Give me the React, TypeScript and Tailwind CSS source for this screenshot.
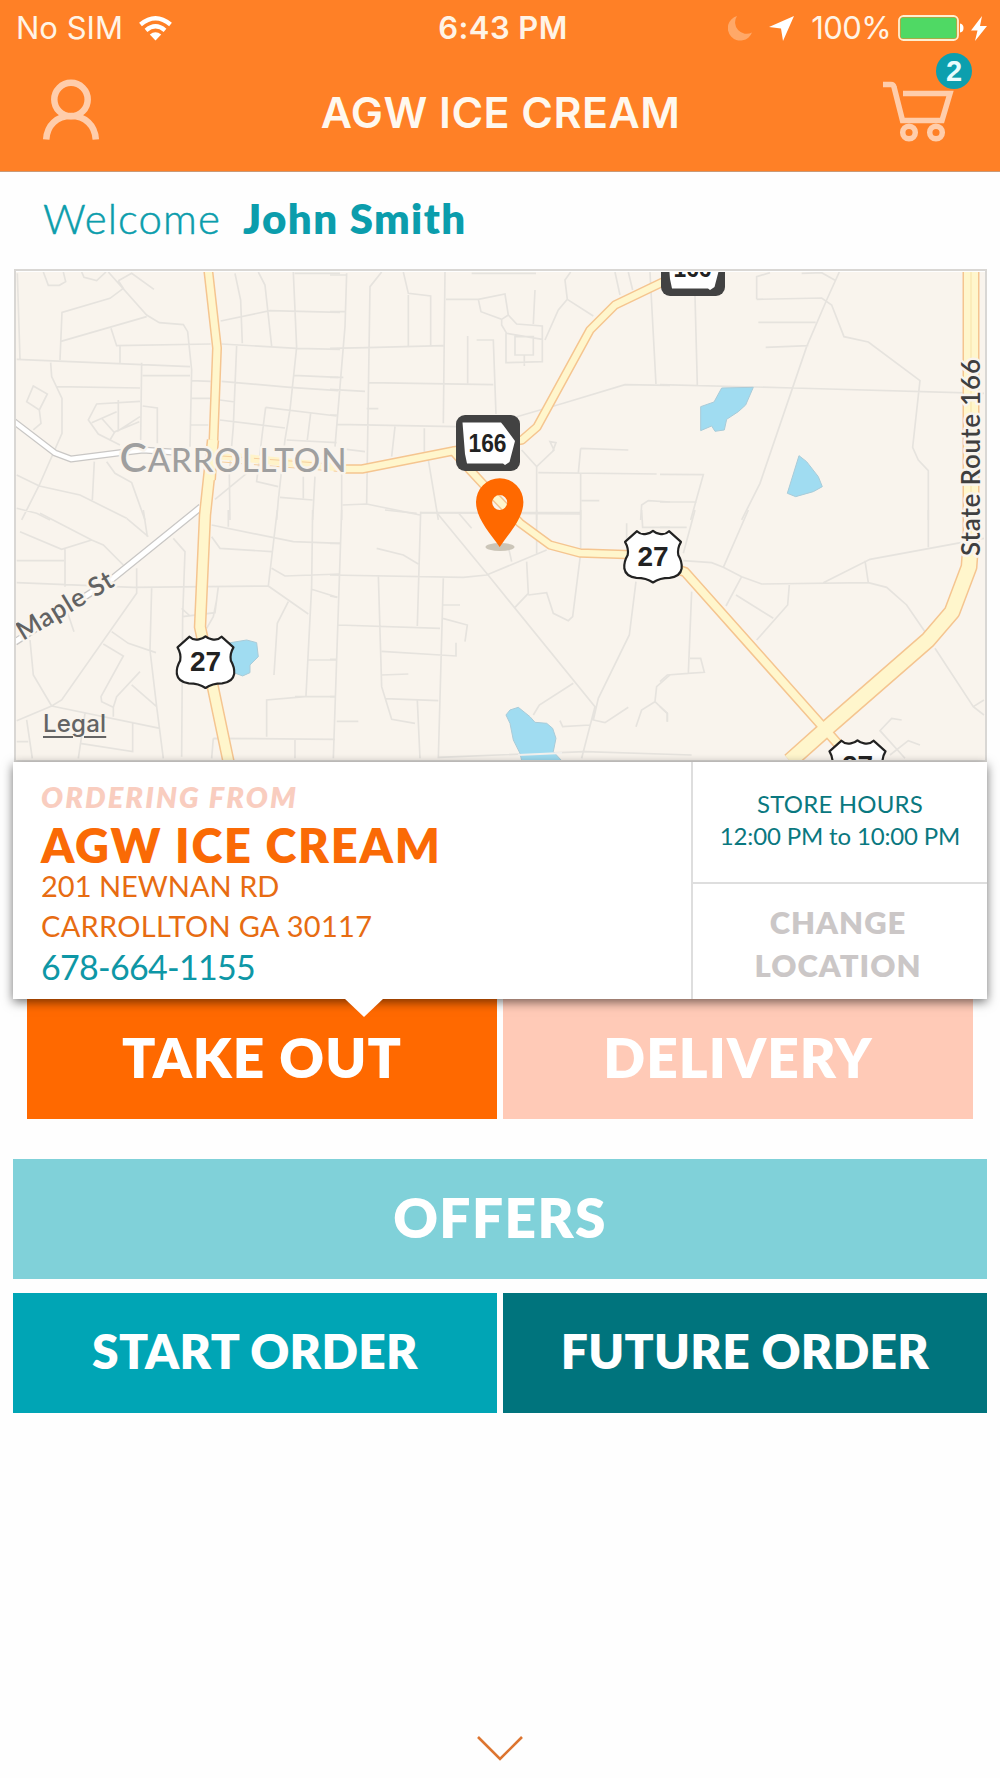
const US_SHIELD =
  'M-48 -76Q-36 -64 -20 -68Q-8 -70 0 -77Q8 -70 20 -68Q36 -64 48 -76L84 -44Q72 -24 76 -4Q88 16 86 36Q82 60 50 64Q20 64 0 78Q-20 64 -50 64Q-82 60 -86 36Q-88 16 -76 -4Q-72 -24 -84 -44Z';

// Side streets, split in map tiles. Every tile is drawn at 3x.
const tiles = [
  {
    x: 0,
    y: 260,
    d: 'M52 40L60 298M130 36L145 76L178 76L197 65L190 36M245 36L252 52L290 62L318 36M325 36L440 165L478 188L550 194L563 215L575 330L570 560M355 62L395 40L462 88M355 62L370 85L330 115L186 157L180 300M180 245L440 170M333 205L350 257L632 252M360 257V308M50 298L570 320M152 308L155 350L186 415V520L118 675L65 780M425 308L422 540M428 347H570M168 380L420 384M428 438L472 444V550M420 424L290 432L265 480L295 522L360 555M355 420V512L420 470M275 488L350 455M305 475L345 520M330 540L345 515L418 485M100 378L142 402L118 450L80 425ZM118 450L123 490L100 510M50 645L118 678L240 705L380 775M283 605L277 720M320 605L345 640L395 668L435 780M50 745L110 760L150 780M705 40L722 120L727 250M775 36L795 75L815 258M662 183L810 152L1020 157M880 36L890 262L870 450L855 540L835 720L830 780M884 40H1020M665 252L890 265L1020 268M710 258L700 500L688 640L690 780M573 362L632 364M665 364L870 382L1015 392M880 346L1015 352M573 415H630M660 420L705 426M573 495H625M660 480L855 504M797 442L1010 468M797 442L787 520L770 665L835 680M932 460L922 540M860 540L1010 548M645 718L740 640M840 712L938 720M910 650V715M945 650L938 780',
  },
  {
    x: 330,
    y: 260,
    d: 'M0 45H50M50 40L45 200L15 560M0 155H45M0 265L110 263L340 257M155 36L120 80L110 730M220 36L235 100L302 108V256M235 105V260M345 36L340 490M348 118H445L525 102L535 165L515 178L453 155L445 118M515 178V195L530 220L637 238M535 165L560 192L637 198V305L528 308V220M555 230V285H610V230ZM583 285V318M615 90L610 192M645 240L685 150L712 118L705 60L722 36M712 118L790 168M425 40H618M413 228V370M440 240H490L498 462M115 368L490 374M0 352H40M0 388L105 394M110 446H145M20 493L380 500M195 500L185 590M283 505V575M0 465H20M295 600L320 750L325 780M545 475L700 430L885 374L1020 376M855 36L870 105M895 36L908 90M960 36L978 372M575 570L620 620L672 570L660 545L678 548L668 575M620 620V780M625 638L980 642M752 565L745 640M752 565L895 570M752 642V780M755 722H808M932 780L935 735L955 722L1020 726M38 735L110 732L270 765M35 570V780M50 568L105 575M270 758H750',
  },
  {
    x: 660,
    y: 260,
    d: 'M105 108L112 376M0 374L400 384L972 400M290 118V50L330 38M290 118L485 114L515 135L552 230L625 246L780 362L758 562L775 600L805 632V780M295 187H467M317 262L445 257M425 40L485 38L528 62M538 36L500 120L440 260L300 670L245 780M0 643L130 644L92 780M0 726H110',
  },
  {
    x: 0,
    y: 510,
    d: 'M60 65L185 118L275 90M120 10L275 90L310 105L370 165M380 25L445 80M430 0L442 80M50 152H192M195 118V230M222 365L200 300M50 218L400 232L805 228M410 175V250L185 570L155 588L50 632M155 588L100 495L90 390M520 85L555 125L548 320L545 740M455 235L450 420L470 590L490 745M335 365L385 400L468 428M310 402L370 438L303 560L305 575L340 592L350 560L420 485M395 525L470 590M340 592V620M155 588L480 655M398 635V725L240 700M255 610L235 745M80 630L97 745M50 695H85M548 320L645 308L655 230M545 295L570 318M685 0V50M635 45L880 95L1020 100M635 80L660 115L815 125M832 0L805 228L925 312M815 175L855 198L1020 192M938 0L935 230L918 558M935 238L1012 262M865 275L832 340L822 495M620 355L640 320L650 270M925 450H1010M1005 560H885M915 560L800 570V680M640 685L1005 688M640 685L635 745M885 688V745',
  },
  {
    x: 330,
    y: 510,
    d: 'M25 345L330 355M0 195L400 202L470 195L650 120M35 0L10 745M0 100H30M0 258L22 262M0 448H20M0 560H16M20 634H85M165 0L260 10M272 5L262 348M270 8L750 12M318 5L470 190L795 590L755 745M385 8L425 55M140 115L220 135L265 162M145 195L155 530L185 628L255 640M165 566L325 572M262 572L270 745M155 424L378 438V398M155 495L235 492M340 205L325 745M338 285H390M338 325L412 345L405 395M620 0V130M535 110L545 155M590 155L595 250L555 292M595 255L650 248L670 310L715 332L728 320L752 130V0M890 40V120M935 0L938 52H1020M918 215L898 375L805 565L790 630L825 638L895 592M690 632L698 650L780 645M610 615L628 585L730 520M325 742L765 725L1085 735M1020 495L980 530L975 575L935 600L918 650M975 575L1012 610V635',
  },
  {
    x: 660,
    y: 510,
    d: 'M105 0L70 130M0 52H80M265 0L190 172M70 152L155 158L190 172L245 200L305 222L625 218L680 232L740 285L795 365M825 415L940 590L972 615M940 590L972 570M245 200L198 288M228 255L340 325M388 225L383 285L290 390M490 218L630 148L972 85M615 152L625 218M805 0V112M95 245L85 490L133 487L122 445H90M85 490L22 495L0 515M0 590L22 610V635M725 630L695 625L660 662L735 745M690 735L745 692L780 705',
  },
];

const highways = [
  { d: 'M208 268L217 348L213.5 440L211 480', w: 10 },
  { d: 'M213 440L205 515L200 627L212 683L229 764', w: 12.5 },
  { d: 'M340 469L362 469L453 451L470 470L483 484L520 523L550 545L580 553L640 555', w: 9.5 },
  { d: 'M453 451L500 443L522 440L537 427L590 330L615 305L665 281', w: 9.5 },
  { d: 'M670 567L685 572L823 727L845 752', w: 10.5 },
  { d: 'M971 268V540L969 567L952 612L928 640L827 728L790 761', w: 17 },
];

function UsShield({ x, y }: { x: number; y: number }) {
  return (
    <g transform={`translate(${x} ${y})`}>
      <path d={US_SHIELD} transform="scale(.3333)" fill="#fff" stroke="#222" strokeWidth="6.500" strokeLinejoin="round" />
      <text
        y="9"
        textAnchor="middle"
        textLength="31"
        className="font-['Liberation_Sans'] text-[28px] font-bold"
        fill="#222"
      >
        27
      </text>
    </g>
  );
}

function StateShield({ x, y }: { x: number; y: number }) {
  return (
    <g transform={`translate(${x} ${y})`}>
      <rect width="64" height="56" rx="9" fill="#424242" />
      <path d="M6.500 7.500H45L47.500 10.500L59 26L53.500 47L49 50L47 48.500H11L9 39Z" fill="#fff" />
      <text
        x="31.500"
        y="36.500"
        textAnchor="middle"
        textLength="38"
        lengthAdjust="spacingAndGlyphs"
        className="font-['Liberation_Sans'] text-[25px] font-bold"
        fill="#222"
      >
        166
      </text>
    </g>
  );
}

function StoreMap() {
  return (
    <svg viewBox="16 272 969 488" className="block h-[488px] w-[969px] bg-[#f9f4ed]">
      {tiles.map((t) => (
        <path
          key={`${t.x}-${t.y}`}
          d={t.d}
          transform={`translate(${t.x} ${t.y}) scale(.3333)`}
          fill="none"
          stroke="#e6e3de"
          strokeWidth="5"
        />
      ))}

      {/* Lakes */}
      <g fill="#a0dcf1" stroke="#a9cbd8" strokeWidth="3">
        <path
          transform="translate(660 260) scale(.3333)"
          d="M185 384L280 382L257 435L235 455L200 478L193 510L165 514L155 498L122 512V440L162 426ZM417 587L440 605L475 650L487 680L460 695L407 710L382 700Z"
        />
        <path
          transform="translate(0 510) scale(.3333)"
          d="M680 400L740 390L770 398L775 440L750 465V488L728 498L680 480Z"
        />
        <path
          transform="translate(330 510) scale(.3333)"
          d="M528 615L540 600L565 592L600 620L615 637L650 640L668 655L678 685L670 725L695 752H575L570 730L550 690L540 640Z"
        />
      </g>
      <path d="M518 755L562 753" stroke="#f3f1ee" strokeWidth="2" />

      {/* White roads */}
      <g fill="none" strokeLinejoin="round">
        <path d="M12 420L55 453L71 459L118 453L143 450L172 452" stroke="#c9c7c5" strokeWidth="7" />
        <path d="M12 420L55 453L71 459L118 453L143 450L172 452" stroke="#fff" strokeWidth="4.500" />
        <path d="M201 507L112 579L15 642" stroke="#c9c7c5" strokeWidth="7.500" />
        <path d="M201 507L112 579L15 642" stroke="#fff" strokeWidth="5" />
      </g>

      {/* Highways */}
      <g fill="none" strokeLinejoin="round">
        <path d="M215 455L345 468" stroke="#fff3c9" strokeWidth="8" />
        <path d="M222 456L345 465M222 462L345 472" stroke="#f6cf9d" strokeWidth="1" strokeDasharray="10 6" />
        {highways.map((r) => (
          <path key={r.d} d={r.d} stroke="#f5c590" strokeWidth={r.w} />
        ))}
        {highways.map((r) => (
          <path key={r.d} d={r.d} stroke="#fff6cc" strokeWidth={r.w - 3} />
        ))}
        <path d="M971 268V540" stroke="#f7e2a8" strokeWidth="1" />
      </g>

      {/* Labels */}
      <g stroke="#f9f4ed" strokeWidth="5" strokeLinejoin="round" className="[paint-order:stroke]">
        <text x="119.500" y="471.500" textLength="227" fill="#9f9f9f" className="font-[Lato] text-[33px] font-medium">
          <tspan className="text-[41px]">C</tspan>ARROLLTON
        </text>
        <text
          transform="translate(980 556) rotate(-90)"
          textLength="197"
          fill="#3f3f3f"
          className="font-[Lato] text-[26px] font-semibold"
        >
          State Route 166
        </text>
        <text
          transform="translate(23 641) rotate(-31)"
          textLength="108"
          fill="#626262"
          className="font-[Lato] text-[26px] font-semibold"
        >
          Maple St
        </text>
      </g>

      <StateShield x={456} y={415} />
      <StateShield x={661} y={240} />
      <UsShield x={205.5} y={662} />
      <UsShield x={653} y={556.5} />
      <UsShield x={857.5} y={766} />

      {/* Store pin */}
      <ellipse cx="500" cy="547" rx="14.500" ry="4" fill="#cbc5b8" />
      <path
        fillRule="evenodd"
        d="M499.700 547C489 532 476 518 476 502A23.700 23.700 0 0 1 523.400 502C523.400 518 510 532 499.700 547ZM499.700 495A7.500 7.500 0 1 0 499.700 510A7.500 7.500 0 1 0 499.700 495Z"
        fill="#ff6900"
      />
    </svg>
  );
}

function StatusBar() {
  return (
    <div className="grid h-[54px] grid-cols-3 items-center pt-px pr-[13px] pl-[16px] text-[31px] leading-[54px] text-[#fff4e6]">
      <div className="flex items-center">
        <span className="w-[123px]">No SIM</span>
        <svg viewBox="0 0 33 25" className="h-[25px] w-[33px]">
          <g fill="none" stroke="#fff" strokeWidth="4.300">
            <path d="M1.500 8.500Q16.500 -4 31.500 8.500" />
            <path d="M7 14.300Q16.500 6.300 26 14.300" />
          </g>
          <path d="M10.800 18.500Q16.500 14 22.200 18.500L16.500 24.500Z" fill="#fff" />
        </svg>
      </div>
      <span className="pl-[3px] text-center font-semibold tracking-[0.4px]">6:43 PM</span>
      <div className="flex items-center justify-end">
        <svg viewBox="0 0 24 25" className="mr-[17px] h-[25px] w-[24px]">
          <path d="M9 0A12.500 12.500 0 1 0 24 16.500A11.500 11.500 0 0 1 9 0Z" fill="#ffa868" />
        </svg>
        <svg viewBox="0 0 25 25" className="mr-[17px] h-[25px] w-[25px]">
          <path d="M25 0L14 25L12 12.500L0 11Z" fill="#fff" />
        </svg>
        <span className="mr-[7px] tracking-[-0.6px]">100%</span>
        <svg viewBox="0 0 66 26" className="mr-[7px] h-[26px] w-[66px]">
          <rect x="1" y="1" width="59" height="24" rx="4.500" fill="none" stroke="#ffefd0" strokeWidth="1.800" />
          <rect x="2.500" y="2.500" width="56" height="21" rx="2.500" fill="#4fd964" />
          <path d="M62 8.500Q65.500 9 65.500 13T62 17.500Z" fill="#fff" />
        </svg>
        <svg viewBox="0 0 16 25" className="h-[25px] w-[16px]">
          <path d="M11 0L0 14.500H6.500L4 25L16 10H9Z" fill="#fff" />
        </svg>
      </div>
    </div>
  );
}

function NavBar() {
  return (
    <div className="flex h-[117px] items-start justify-between pr-[46px] pl-[42px]">
      <svg viewBox="0 0 58 62" className="mt-[25px] h-[62px] w-[58px]" fill="none" stroke="#ffcdab" strokeWidth="6.500">
        <circle cx="29" cy="20.500" r="16.700" />
        <path d="M4.200 60.500C5 46 15 37 29 37S53 46 53.800 60.500" />
      </svg>
      <h1 className="mt-[33px] ml-[19px] text-[43px] leading-[50px] font-semibold tracking-[0.45px] text-[#fff8ee]">
        AGW ICE CREAM
      </h1>
      <div className="relative mt-[27px] h-[62px] w-[72px]">
        <svg viewBox="0 0 72 62" className="h-[62px] w-[72px]" fill="none" stroke="#ffcdab" strokeWidth="5.500">
          <path d="M1 3.500H9Q11.500 3.500 12 6L20.500 39.500H60L68 12.500H21" />
          <circle cx="27" cy="51.500" r="6.300" />
          <circle cx="54" cy="51.500" r="6.300" />
        </svg>
        <span className="absolute -top-[28px] left-[54px] flex h-[36px] w-[36px] items-center justify-center rounded-full bg-[#0c9fae] font-['Liberation_Sans'] text-[29px] leading-none font-bold text-[#e9fcfd]">
          2
        </span>
      </div>
    </div>
  );
}

export default function App() {
  return (
    <div className="flex h-[1778px] w-[1000px] flex-col overflow-hidden bg-[#fefefe] font-[Lato,sans-serif]">
      <header className="h-[172px] shrink-0 border-b border-[#c99a77] bg-[#ff8026] font-[Inter,sans-serif]">
        <StatusBar />
        <NavBar />
      </header>

      {/* Welcome */}
      <div className="flex h-[97px] shrink-0 items-center pb-[6px] pl-[43px] text-[42px] leading-[50px] text-[#0b9dac]">
        <span className="w-[200px] font-light tracking-[1.1px] [-webkit-text-stroke:0.5px_#0b9dac]">Welcome</span>
        <span className="font-extrabold tracking-[1.4px]">John Smith</span>
      </div>

      {/* Store card */}
      <main className="flex flex-col px-[13px]">
        <div className="relative ml-px h-[493px] w-[973px] border-2 border-[#d9d7d4] pt-px">
          <StoreMap />
          <span className="absolute bottom-[22px] left-[27px] font-[Inter] text-[24px] leading-[28px] font-medium tracking-[0.2px] text-[#646464] underline underline-offset-[4px]">
            Legal
          </span>
        </div>

        <section className="relative z-10 flex h-[237px] bg-white shadow-[0_3px_10px_rgba(0,0,0,0.55)]">
          <div className="flex-1 pt-[11px] pl-[28px] text-[29px] text-[#e76c12]">
            <p className="leading-[48px] font-extrabold tracking-[2.1px] text-[#f9cdbf] italic">ORDERING FROM</p>
            <h2 className="relative top-px text-[47px] leading-[46px] font-extrabold tracking-[1.8px] text-[#fa6a05]">
              AGW ICE CREAM
            </h2>
            <p className="leading-[37px]">201 NEWNAN RD</p>
            <p className="leading-[43px] tracking-[0.3px]">CARROLLTON GA 30117</p>
            <p className="text-[34px] leading-[39px] tracking-[-0.7px] text-[#0e97a6]">678-664-1155</p>
          </div>
          <div className="flex w-[296px] flex-col border-l-2 border-[#dedede] text-center">
            <div className="h-[122px] border-b-2 border-[#dedede] pt-[26px] text-[24px] leading-[32px] text-[#0a7880]">
              <p className="tracking-[0.2px]">STORE HOURS</p>
              <p className="tracking-[-0.15px]">12:00 PM to 10:00 PM</p>
            </div>
            <button className="flex-1 pt-[4px] pr-[4px] text-[31px] leading-[43px] font-extrabold tracking-[1px] text-[#cbc7c7]">
              CHANGE
              <br />
              LOCATION
            </button>
          </div>
          <div className="absolute top-[236px] left-[331px] h-[19px] w-[40px] bg-white [clip-path:polygon(0_0,100%_0,50%_100%)]" />
        </section>

        <div className="mx-[14px] flex h-[120px] gap-[6px] text-[55px] font-extrabold tracking-[1.1px] text-white">
          <button className="flex-1 bg-[#ff6900] pb-[4px]">TAKE OUT</button>
          <button className="flex-1 bg-[#ffcab7] pb-[4px]">DELIVERY</button>
        </div>

        <button className="mt-[40px] h-[120px] bg-[#80d1d9] pb-[4px] text-[55px] font-extrabold tracking-[1.4px] text-white">
          OFFERS
        </button>
        <div className="mt-[14px] flex h-[120px] gap-[6px] text-[48px] font-extrabold tracking-[0.3px] text-white">
          <button className="flex-1 bg-[#00a5b5] pb-[5px]">START ORDER</button>
          <button className="flex-1 bg-[#00747d] pb-[5px]">FUTURE ORDER</button>
        </div>
      </main>

      <svg viewBox="0 0 50 28" className="mx-auto mt-auto mb-[16px] h-[28px] w-[50px] shrink-0">
        <path d="M3 3L25 25L47 3" fill="none" stroke="#dd7530" strokeWidth="2.600" />
      </svg>
    </div>
  );
}
